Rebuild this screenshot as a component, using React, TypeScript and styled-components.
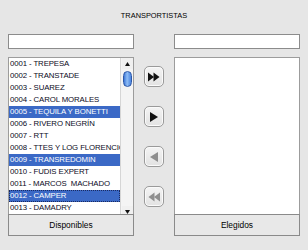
import React from "react";
import styled, { createGlobalStyle } from "styled-components";

const GlobalStyle = createGlobalStyle`
  html, body {
    margin: 0;
    padding: 0;
    background: #e6e6e6;
  }
  body {
    font-family: "Liberation Sans", Arial, sans-serif;
  }
`;

const Panel = styled.div`
  width: 308px;
  height: 250px;
  box-sizing: border-box;
  background: #e6e6e6;
  display: grid;
  grid-template-columns: 126px 20px 126px;
  grid-template-rows: 34px 15px 161px 22px;
  column-gap: 10px;
  padding: 0 9px 0 8px;
`;

const Title = styled.div`
  grid-column: 1 / 4;
  display: flex;
  align-items: center;
  justify-content: center;
  padding-bottom: 3px;
  font-size: 7.4px;
  color: #000;
`;

const Search = styled.input`
  box-sizing: border-box;
  width: 126px;
  height: 15px;
  margin: 0;
  border: 1px solid #8c8c8c;
  background: #fff;
  outline: none;
  padding: 0 2px;
`;

const ListBox = styled.div`
  box-sizing: border-box;
  margin-top: 8px;
  height: 161px;
  border: 1px solid #9c9c9c;
  background: #fff;
  display: flex;
  overflow: hidden;
`;

const Items = styled.div`
  flex: 1;
  overflow: hidden;
`;

const Row = styled.div<{ $sel?: boolean; $focus?: boolean }>`
  height: 12px;
  line-height: 12px;
  font-size: 7.8px;
  letter-spacing: -0.1px;
  white-space: nowrap;
  overflow: hidden;
  padding-left: 1px;
  box-sizing: border-box;
  color: ${(p) => (p.$sel ? "#ffffff" : "#0a0a1c")};
  background: ${(p) => (p.$sel ? "#3b69c6" : "transparent")};
  outline: ${(p) => (p.$focus ? "1px dotted #1a2a60" : "none")};
  outline-offset: -1px;
`;

const ScrollBar = styled.div`
  width: 12px;
  border-left: 1px solid #d6d6d6;
  background: #f4f4f4;
  display: flex;
  flex-direction: column;
  align-items: center;
`;

const ScrollArrow = styled.div`
  width: 11px;
  height: 11px;
  display: flex;
  align-items: center;
  justify-content: center;
  background: #f0f0f0;
`;

const Track = styled.div`
  flex: 1;
  width: 100%;
  display: flex;
  justify-content: center;
  padding-top: 2px;
`;

const Thumb = styled.div`
  width: 9px;
  height: 16px;
  border-radius: 5px;
  border: 1px solid #2d58a8;
  box-sizing: border-box;
  background: linear-gradient(90deg, #3f78d8 0%, #8fbdf5 45%, #4a84e0 100%);
`;

const Controls = styled.div`
  grid-row: 3;
  grid-column: 2;
  display: flex;
  flex-direction: column;
  align-items: center;
  padding-top: 17px;
  gap: 19px;
`;

const ArrowButton = styled.div`
  width: 20px;
  height: 21px;
  box-sizing: border-box;
  border: 1px solid #9a9a9a;
  border-radius: 5px;
  background: linear-gradient(180deg, #f4f4f4 0%, #e2e2e2 100%);
  display: flex;
  align-items: center;
  justify-content: center;
  box-shadow: inset 0 0 0 1px #fafafa;
`;

const FooterButton = styled.div`
  box-sizing: border-box;
  margin-top: 4px;
  height: 22px;
  border: 1px solid #8a8a8a;
  background: #e8e8e8;
  display: flex;
  align-items: center;
  justify-content: center;
  font-size: 8.4px;
  color: #000;
`;

const items: { t: string; sel?: boolean; focus?: boolean }[] = [
  { t: "0001 - TREPESA" },
  { t: "0002 - TRANSTADE" },
  { t: "0003 - SUAREZ" },
  { t: "0004 - CAROL MORALES" },
  { t: "0005 - TEQUILA Y BONETTI", sel: true },
  { t: "0006 - RIVERO NEGRÍN" },
  { t: "0007 - RTT" },
  { t: "0008 - TTES Y LOG FLORENCIO" },
  { t: "0009 - TRANSREDOMIN", sel: true },
  { t: "0010 - FUDIS EXPERT" },
  { t: "0011 - MARCOS\u00a0 MACHADO" },
  { t: "0012 - CAMPER", sel: true, focus: true },
  { t: "0013 - DAMADRY" },
  { t: "0014 - ANTEQUERA" },
];

const Tri = ({ dir, double, color }: { dir: "l" | "r"; double?: boolean; color: string }) => (
  <svg width="14" height="12" viewBox="0 0 14 12">
    <g transform={dir === "l" ? "translate(14 0) scale(-1 1)" : undefined} fill={color}>
      {double ? (
        <>
          <path d="M1 1.5 L7 6 L1 10.5 Z" />
          <path d="M6.5 1.5 L12.5 6 L6.5 10.5 Z" />
        </>
      ) : (
        <path d="M3 1 L11 6 L3 11 Z" />
      )}
    </g>
  </svg>
);

export default function App() {
  return (
    <>
      <GlobalStyle />
      <Panel>
        <Title>TRANSPORTISTAS</Title>
        <Search />
        <div />
        <Search />
        <ListBox>
          <Items>
            {items.map((it) => (
              <Row key={it.t} $sel={it.sel} $focus={it.focus}>
                {it.t}
              </Row>
            ))}
          </Items>
          <ScrollBar>
            <ScrollArrow>
              <svg width="5" height="4" viewBox="0 0 5 4">
                <path d="M2.5 0 L5 4 L0 4 Z" fill="#111" />
              </svg>
            </ScrollArrow>
            <Track>
              <Thumb />
            </Track>
            <ScrollArrow>
              <svg width="5" height="4" viewBox="0 0 5 4">
                <path d="M0 0 L5 0 L2.5 4 Z" fill="#111" />
              </svg>
            </ScrollArrow>
          </ScrollBar>
        </ListBox>
        <Controls>
          <ArrowButton>
            <Tri dir="r" double color="#111" />
          </ArrowButton>
          <ArrowButton>
            <Tri dir="r" color="#111" />
          </ArrowButton>
          <ArrowButton>
            <Tri dir="l" color="#8e8e8e" />
          </ArrowButton>
          <ArrowButton>
            <Tri dir="l" double color="#8e8e8e" />
          </ArrowButton>
        </Controls>
        <ListBox>
          <Items />
        </ListBox>
        <FooterButton>Disponibles</FooterButton>
        <div />
        <FooterButton>Elegidos</FooterButton>
      </Panel>
    </>
  );
}
